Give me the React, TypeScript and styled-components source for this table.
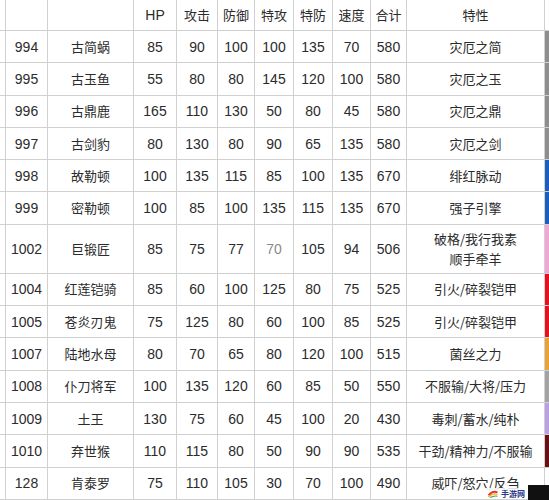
import styled, { createGlobalStyle } from "styled-components";

const GlobalStyle = createGlobalStyle`
  html, body {
    margin: 0;
    padding: 0;
    background: #fff;
  }
`;

interface Pokemon {
  no: string;
  name: string;
  stats: string[];
  ability: string[];
  tag?: string;
  tall?: boolean;
}

const headers = ["HP", "攻击", "防御", "特攻", "特防", "速度", "合计"];

const rows: Pokemon[] = [
  { no: "994", name: "古简蜗", stats: ["85", "90", "100", "100", "135", "70", "580"], ability: ["灾厄之简"], tag: "#8e8e8e" },
  { no: "995", name: "古玉鱼", stats: ["55", "80", "80", "145", "120", "100", "580"], ability: ["灾厄之玉"], tag: "#8e8e8e" },
  { no: "996", name: "古鼎鹿", stats: ["165", "110", "130", "50", "80", "45", "580"], ability: ["灾厄之鼎"], tag: "#8e8e8e" },
  { no: "997", name: "古剑豹", stats: ["80", "130", "80", "90", "65", "135", "580"], ability: ["灾厄之剑"], tag: "#8e8e8e" },
  { no: "998", name: "故勒顿", stats: ["100", "135", "115", "85", "100", "135", "670"], ability: ["绯红脉动"], tag: "#1b5fbd" },
  { no: "999", name: "密勒顿", stats: ["100", "85", "100", "135", "115", "135", "670"], ability: ["强子引擎"], tag: "#1b5fbd" },
  { no: "1002", name: "巨锻匠", stats: ["85", "75", "77", "70", "105", "94", "506"], ability: ["破格/我行我素", "顺手牵羊"], tag: "#f2a6d6", tall: true },
  { no: "1004", name: "红莲铠骑", stats: ["85", "60", "100", "125", "80", "75", "525"], ability: ["引火/碎裂铠甲"], tag: "#e5121b" },
  { no: "1005", name: "苍炎刃鬼", stats: ["75", "125", "80", "60", "100", "85", "525"], ability: ["引火/碎裂铠甲"], tag: "#e5121b" },
  { no: "1007", name: "陆地水母", stats: ["80", "70", "65", "80", "120", "100", "515"], ability: ["菌丝之力"], tag: "#e9a236" },
  { no: "1008", name: "仆刀将军", stats: ["100", "135", "120", "60", "85", "50", "550"], ability: ["不服输/大将/压力"], tag: "#a3a3a3" },
  { no: "1009", name: "土王", stats: ["130", "75", "60", "45", "100", "20", "430"], ability: ["毒刺/蓄水/纯朴"], tag: "#bba0e6" },
  { no: "1010", name: "弃世猴", stats: ["110", "115", "80", "50", "90", "90", "535"], ability: ["干劲/精神力/不服输"], tag: "#6d1015" },
  { no: "128", name: "肯泰罗", stats: ["75", "110", "105", "30", "70", "100", "490"], ability: ["威吓/怒穴/反刍"] },
];

const Page = styled.div`
  position: relative;
  width: 549px;
  height: 500px;
  overflow: hidden;
  background: #fff;
`;

const Row = styled.div<{ $h: number }>`
  display: grid;
  grid-template-columns: 6px 42px 86px 43px 41px 37px 39px 39px 38px 36px 138px 4px;
  height: ${(p) => p.$h}px;
  box-sizing: border-box;
  border-bottom: 1px solid #d0d0d0;
`;

const Gutter = styled.div`
  border-right: 1px solid #d0d0d0;
`;

const Cell = styled.div<{ $cjk?: boolean; $faint?: boolean }>`
  display: flex;
  flex-direction: column;
  align-items: center;
  justify-content: center;
  box-sizing: border-box;
  border-right: 1px solid #d0d0d0;
  color: ${(p) => (p.$faint ? "#8a8a8a" : "#2b2b2b")};
  font-family: ${(p) =>
    p.$cjk
      ? `"Noto Sans CJK SC", sans-serif`
      : `"Liberation Sans", "Noto Sans CJK SC", sans-serif`};
  font-size: ${(p) => (p.$cjk ? "13px" : "14px")};
  line-height: 20px;
  white-space: nowrap;
`;

const Tag = styled.div<{ $color?: string }>`
  background: ${(p) => p.$color ?? "#fff"};
`;

const Watermark = styled.div`
  position: absolute;
  right: 0;
  bottom: 0;
  display: flex;
  align-items: flex-end;
`;

const Badge = styled.div`
  display: flex;
  align-items: center;
  gap: 2px;
  height: 11px;
  padding: 0 3px;
  margin-bottom: 1px;
  background: rgba(255, 255, 255, 0.85);
  font-family: "Noto Sans CJK SC", sans-serif;
  font-size: 8px;
  line-height: 11px;
  font-weight: 700;
  color: #2a3a8a;
`;

const BlackBox = styled.div`
  width: 21px;
  height: 15px;
  background: #111;
`;

export default function App() {
  return (
    <Page>
      <GlobalStyle />
      <Row $h={31}>
        <Gutter />
        <Cell />
        <Cell />
        {headers.map((h) => (
          <Cell key={h} $cjk={h !== "HP"}>
            {h}
          </Cell>
        ))}
        <Cell $cjk>特性</Cell>
        <Tag />
      </Row>
      {rows.map((r) => (
        <Row key={r.no} $h={r.tall ? 49 : 32.3}>
          <Gutter />
          <Cell>{r.no}</Cell>
          <Cell $cjk>{r.name}</Cell>
          {r.stats.map((s, i) => (
            <Cell key={i} $faint={r.tall && i === 3}>
              {s}
            </Cell>
          ))}
          <Cell $cjk>
            {r.ability.map((a) => (
              <span key={a}>{a}</span>
            ))}
          </Cell>
          <Tag $color={r.tag} />
        </Row>
      ))}
      <Row $h={20}>
        <Gutter />
        <Cell />
        <Cell />
        {headers.map((h) => (
          <Cell key={h} />
        ))}
        <Cell />
        <Tag />
      </Row>
      <Watermark>
        <Badge>
          <svg width="12" height="9" viewBox="0 0 12 10">
            <path d="M1 7 Q6 1 11 4" stroke="#e8342a" strokeWidth="2" fill="none" />
            <path d="M1 9 Q6 4 11 6" stroke="#f2b51e" strokeWidth="1.6" fill="none" />
            <path d="M3 9.5 Q7 7 11 8" stroke="#3aa845" strokeWidth="1.2" fill="none" />
          </svg>
          手游网
        </Badge>
        <BlackBox />
      </Watermark>
    </Page>
  );
}
